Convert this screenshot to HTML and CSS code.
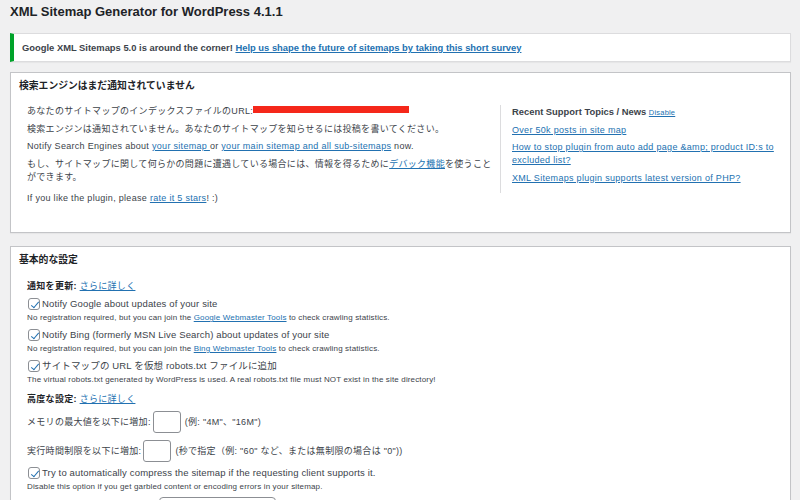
FILE: index.html
```html
<!DOCTYPE html>
<html lang="ja">
<head>
<meta charset="utf-8">
<title>XML Sitemap Generator</title>
<link rel="stylesheet" href="styles.css">
</head>
<body>
<div class="wrap">
  <h1 class="title">XML Sitemap Generator for WordPress 4.1.1</h1>
  <div class="notice"><strong>Google XML Sitemaps 5.0 is around the corner! <a href="#">Help us shape the future of sitemaps by taking this short survey</a></strong></div>

  <div class="postbox box-status">
    <h2 class="hndle">検索エンジンはまだ通知されていません</h2>
    <div class="inside cols">
      <div class="main">
        <p>あなたのサイトマップのインデックスファイルのURL: <span class="redact"></span></p>
        <p>検索エンジンは通知されていません。あなたのサイトマップを知らせるには投稿を書いてください。</p>
        <p>Notify Search Engines about <a href="#">your sitemap </a> or <a href="#">your main sitemap and all sub-sitemaps</a> now.</p>
        <p>もし、サイトマップに関して何らかの問題に遭遇している場合には、情報を得るために<a href="#">デバック機能</a>を使うことができます。</p>
        <p class="gap">If you like the plugin, please <a href="#">rate it 5 stars</a>! :)</p>
      </div>
      <div class="side">
        <h3>Recent Support Topics / News <a href="#" class="tiny">Disable</a></h3>
        <ul>
          <li><a href="#">Over 50k posts in site map</a></li>
          <li><a href="#">How to stop plugin from auto add page &amp;amp; product ID:s to excluded list?</a></li>
          <li><a href="#">XML Sitemaps plugin supports latest version of PHP?</a></li>
        </ul>
      </div>
    </div>
  </div>

  <div class="postbox box-basic">
    <h2 class="hndle">基本的な設定</h2>
    <div class="inside settings">
      <div class="label"><b>通知を更新:</b> <a href="#">さらに詳しく</a></div>
      <div class="opt">
        <label class="check"><span class="cb on"></span>Notify Google about updates of your site</label>
        <small>No registration required, but you can join the <a href="#">Google Webmaster Tools</a> to check crawling statistics.</small>
      </div>
      <div class="opt">
        <label class="check"><span class="cb on"></span>Notify Bing (formerly MSN Live Search) about updates of your site</label>
        <small>No registration required, but you can join the <a href="#">Bing Webmaster Tools</a> to check crawling statistics.</small>
      </div>
      <div class="opt">
        <label class="check"><span class="cb on"></span>サイトマップの URL を仮想 robots.txt ファイルに追加</label>
        <small>The virtual robots.txt generated by WordPress is used. A real robots.txt file must NOT exist in the site directory!</small>
      </div>
      <div class="label label2"><b>高度な設定:</b> <a href="#">さらに詳しく</a></div>
      <div class="field">メモリの最大値を以下に増加:<span class="input"></span>(例: "4M"、"16M")</div>
      <div class="field">実行時間制限を以下に増加:<span class="input"></span>(秒で指定（例: "60" など、または無制限の場合は "0"))</div>
      <div class="opt">
        <label class="check"><span class="cb on"></span>Try to automatically compress the sitemap if the requesting client supports it.</label>
        <small>Disable this option if you get garbled content or encoding errors in your sitemap.</small>
      </div>
      <div class="field-last"><span class="select"></span></div>
    </div>
  </div>
</div>
</body>
</html>
```

FILE: styles.css
```css
* { box-sizing: border-box; }
html, body { margin: 0; padding: 0; }
body {
  background: #f0f0f1;
  color: #3c434a;
  font-family: "Liberation Sans", "Noto Sans CJK JP", sans-serif;
  font-size: 9px;
  letter-spacing: 0.3px;
  line-height: 13px;
  overflow: hidden;
  height: 500px;
}
a { color: #2271b1; text-decoration: underline; }
.wrap { padding: 0 9px 0 10px; }

.title {
  margin: 0;
  padding: 3px 0 0;
  height: 33px;
  font-size: 13px;
  letter-spacing: 0;
  font-weight: bold;
  color: #1d2327;
  line-height: 18px;
}

.notice {
  background: #fff;
  border: 1px solid #dcdcde;
  border-left: 4px solid #00a32a;
  height: 29px;
  padding: 0 0 0 8px;
  display: flex;
  align-items: center;
  font-size: 9.4px;
  letter-spacing: 0;
  color: #3c434a;
  box-shadow: 0 1px 1px rgba(0,0,0,.04);
}
.notice strong { font-weight: bold; }

.postbox {
  background: #fff;
  border: 1px solid #c3c4c7;
  box-shadow: 0 1px 1px rgba(0,0,0,.04);
  margin-top: 10px;
}
.box-basic { margin-top: 13px; height: 300px; }
.hndle {
  margin: 0;
  font-size: 9.8px;
  letter-spacing: 0;
  font-weight: bold;
  color: #1d2327;
  padding: 6px 8px 0;
  height: 24px;
  line-height: 13px;
}
.inside { padding: 0 16px; }

.cols { display: flex; padding-top: 8px; height: 135px; }
.main { width: 469px; flex: none; }
.main p { margin: 0 0 4.5px; }
.main p.gap { margin-top: 8.5px; }
.redact {
  display: inline-block;
  width: 156px;
  height: 7px;
  background: #f5271a;
  vertical-align: 1px;
  margin-left: -3px;
}
.side {
  margin-left: 4px;
  border-left: 1px solid #dcdcde;
  padding-left: 11px;
  width: 282px;
  padding-top: 0;
  height: 88px;
}
.side h3 {
  margin: 0 0 4.5px;
  font-size: 9.4px;
  letter-spacing: 0;
  font-weight: bold;
  color: #3c434a;
}
.side .tiny { font-size: 7.5px; font-weight: normal; letter-spacing: 0.2px; }
.side ul { list-style: none; margin: 0; padding: 0; }
.side li { margin: 0 0 4.5px; }

.settings { padding-top: 8.5px; }
.label { margin-bottom: 4.5px; }
.label b { color: #1d2327; }
.label2 { margin-top: 6.5px; margin-bottom: 5.5px; }
.opt { display: flex; flex-direction: column; margin-bottom: 4px; }
.check {
  display: flex;
  align-items: center;
  font-size: 9.5px;
  letter-spacing: 0.15px;
  line-height: 14px;
  color: #3c434a;
}
.cb {
  width: 12px;
  height: 12px;
  border: 1px solid #8c8f94;
  border-radius: 3px;
  margin: 0 2px 0 1px;
  position: relative;
  flex: none;
  background: #fff;
}
.cb.on::after {
  content: "";
  position: absolute;
  left: 3.5px;
  top: 0.5px;
  width: 3px;
  height: 7px;
  border: solid #2271b1;
  border-width: 0 1.8px 1.8px 0;
  transform: rotate(40deg);
}
small {
  font-size: 8px;
  letter-spacing: 0.15px;
  line-height: 12px;
  margin-top: 1px;
  display: block;
  color: #3c434a;
}
.field {
  display: flex;
  align-items: center;
  height: 22px;
  margin-bottom: 7px;
}
.field + .opt { margin-top: -3px; }
.input {
  display: inline-block;
  width: 28px;
  height: 22px;
  margin: 0 4px 0 2px;
  border: 1px solid #8c8f94;
  border-radius: 3px;
  background: #fff;
}
.field-last { padding-left: 132px; }
.select {
  display: block;
  width: 117px;
  height: 20px;
  border: 1px solid #8c8f94;
  border-radius: 4px;
}
```
